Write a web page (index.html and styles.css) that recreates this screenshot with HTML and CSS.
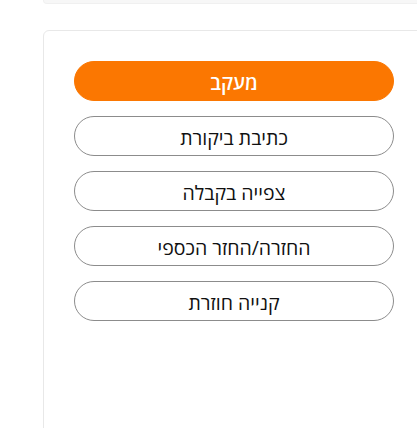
FILE: index.html
```html
<!DOCTYPE html>
<html lang="he" dir="rtl">
<head>
<meta charset="utf-8">
<link rel="stylesheet" href="styles.css">
</head>
<body>
<div class="page">
  <div class="topbar"></div>
  <div class="card">
    <div class="actions">
      <button class="btn btn-primary">מעקב</button>
      <button class="btn">כתיבת ביקורת</button>
      <button class="btn">צפייה בקבלה</button>
      <button class="btn">החזרה/החזר הכספי</button>
      <button class="btn">קנייה חוזרת</button>
    </div>
  </div>
</div>
</body>
</html>
```
FILE: styles.css
```css
html, body {
  margin: 0;
  padding: 0;
  background: #ffffff;
  overflow: hidden;
}
.page {
  direction: ltr;
  width: 417px;
  height: 428px;
  overflow: hidden;
  font-family: "Open Sans", "Liberation Sans", Arial, sans-serif;
}
.topbar {
  margin-left: 43px;
  width: 420px;
  height: 4px;
  background: #f7f7f7;
  border: 1px solid #f0f0f0;
  border-top: none;
  border-radius: 0 0 0 6px;
  box-sizing: border-box;
}
.card {
  margin-top: 26px;
  margin-left: 43px;
  width: 420px;
  height: 430px;
  box-sizing: border-box;
  border: 1px solid #e8e8e8;
  border-radius: 6px 0 0 0;
  padding: 30px 0 0 30px;
}
.actions {
  display: flex;
  flex-direction: column;
  gap: 15px;
  width: 320px;
}
.btn {
  direction: rtl;
  height: 40px;
  width: 320px;
  border-radius: 20px;
  border: 1px solid #8c8c8c;
  background: #ffffff;
  color: #111111;
  font-family: "Open Sans", "Liberation Sans", Arial, sans-serif;
  font-size: 19.5px;
  font-weight: 500;
  padding: 2px 0 0 0;
  text-align: center;
}
.btn-primary {
  background: #fb7701;
  border-color: #fb7701;
  color: #ffffff;
  font-weight: 600;
}
```
